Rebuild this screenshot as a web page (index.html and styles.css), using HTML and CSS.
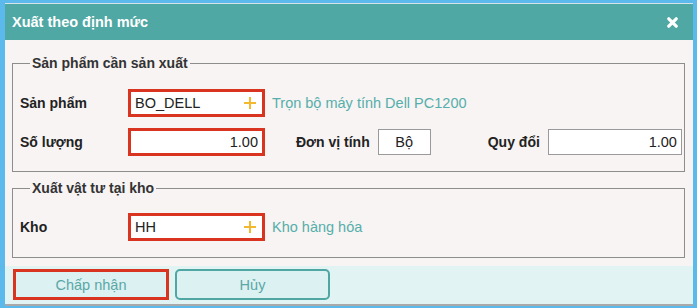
FILE: index.html
```html
<!DOCTYPE html>
<html lang="vi">
<head>
<meta charset="utf-8">
<title>Xuất theo định mức</title>
<link rel="stylesheet" href="styles.css">
</head>
<body>
<div class="dialog">
  <div class="titlebar">
    <span class="title">Xuất theo định mức</span>
    <svg class="close" width="11" height="11" viewBox="0 0 11 11"><path d="M1.8 1.8 L9.2 9.2 M9.2 1.8 L1.8 9.2" stroke="#fff" stroke-width="3.2" stroke-linecap="round"/></svg>
  </div>
  <div class="content">
    <fieldset class="group">
      <legend>Sản phẩm cần sản xuất</legend>
      <div class="row">
        <span class="lbl">Sản phẩm</span>
        <div class="field hl"><span class="val">BO_DELL</span><svg class="plus" width="12" height="12" viewBox="0 0 12 12"><path d="M6 0 V12 M0 6 H12" stroke="#f2b830" stroke-width="2"/></svg></div>
        <span class="link">Trọn bộ máy tính Dell PC1200</span>
      </div>
      <div class="row row2">
        <span class="lbl">Số lượng</span>
        <div class="field hl num"><span class="val">1.00</span></div>
        <span class="lbl2 unit-lbl">Đơn vị tính</span>
        <div class="box unit">Bộ</div>
        <span class="lbl2 conv-lbl">Quy đổi</span>
        <div class="box conv">1.00</div>
      </div>
    </fieldset>
    <fieldset class="group group2">
      <legend>Xuất vật tư tại kho</legend>
      <div class="row">
        <span class="lbl">Kho</span>
        <div class="field hl"><span class="val">HH</span><svg class="plus" width="12" height="12" viewBox="0 0 12 12"><path d="M6 0 V12 M0 6 H12" stroke="#f2b830" stroke-width="2"/></svg></div>
        <span class="link">Kho hàng hóa</span>
      </div>
    </fieldset>
  </div>
  <div class="footer">
    <button class="btn btn-ok">Chấp nhận</button>
    <button class="btn btn-cancel">Hủy</button>
  </div>
</div>
</body>
</html>
```
FILE: styles.css
```css
html, body {
  margin: 0;
  padding: 0;
}
body {
  background: #5bb9ec;
  font-family: "Liberation Sans", Arial, sans-serif;
  font-size: 14px;
  color: #222;
  height: 308px;
  overflow: hidden;
}
.dialog {
  margin: 3px 0 0 5px;
  width: 688px;
  background: #f7f4f3;
  border-top: 1px solid #d6e4ea;
  border-bottom: 2px solid #a9a9a9;
}
.titlebar {
  height: 36px;
  background: #4fa8a4;
  display: flex;
  align-items: center;
  justify-content: space-between;
  padding: 0 15px 0 7px;
}
.title {
  color: #fff;
  font-weight: bold;
  font-size: 14.5px;
}
.close {
  display: block;
}
.content {
  padding: 15px 8px 8px 7px;
}
.group {
  margin: 0;
  border: 1px solid #8d8d8d;
  padding: 18px 2px 15px 7px;
}
.group2 {
  margin-top: 8px;
  padding-top: 17px;
  padding-bottom: 16px;
}
legend {
  margin-left: 10px;
  padding: 0 2px;
  font-weight: bold;
  font-size: 14px;
  line-height: 16px;
  color: #333;
}
.row {
  display: flex;
  align-items: center;
  height: 28px;
}
.row2 {
  margin-top: 11px;
}
.lbl {
  width: 108px;
  font-weight: bold;
  color: #222;
}
.lbl2 {
  font-weight: bold;
  color: #222;
}
.field {
  box-sizing: border-box;
  width: 137px;
  height: 28px;
  background: #fff;
  display: flex;
  align-items: center;
  justify-content: space-between;
  padding: 0 4px;
}
.hl {
  border: 3px solid #d8341f;
}
.num {
  justify-content: flex-end;
}
.val {
  color: #222;
  font-size: 14.5px;
}
.plus {
  display: block;
  margin-right: 2px;
}
.link {
  margin-left: 7px;
  color: #56aeaa;
  font-size: 14.5px;
}
.unit-lbl {
  margin-left: 31px;
}
.box {
  box-sizing: border-box;
  height: 26px;
  background: #fff;
  border: 1px solid #9a9a9a;
  display: flex;
  align-items: center;
  color: #222;
  font-size: 14.5px;
}
.unit {
  width: 53px;
  margin-left: 8px;
  justify-content: center;
}
.conv-lbl {
  margin-left: 57px;
}
.conv {
  width: 134px;
  margin-left: 8px;
  justify-content: flex-end;
  padding-right: 4px;
}
.footer {
  background: #e1f3f3;
  padding: 3px 8px 4px;
  display: flex;
  gap: 6px;
}
.btn {
  box-sizing: border-box;
  width: 156px;
  height: 31px;
  font-family: "Liberation Sans", Arial, sans-serif;
  font-size: 14.5px;
  color: #5aa7a7;
  background: #dcf1f1;
  margin: 0;
  padding: 0;
}
.btn-ok {
  border: 3px solid #d8341f;
}
.btn-cancel {
  width: 155px;
  border: 2px solid #4fa6a2;
  border-radius: 5px;
}
```
